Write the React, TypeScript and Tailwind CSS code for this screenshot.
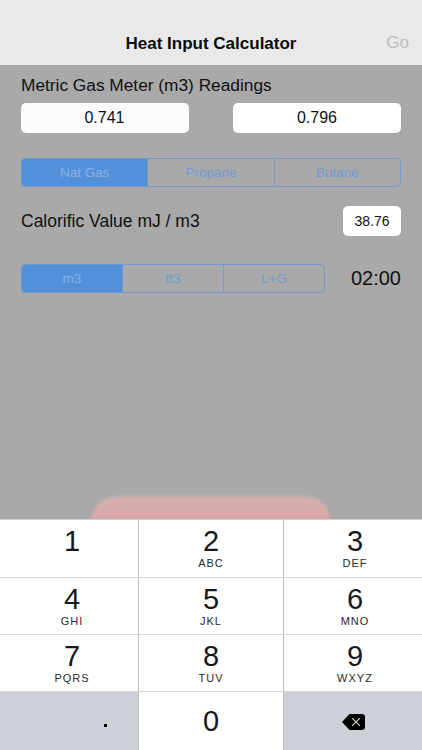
const font = "[font-family:'Liberation_Sans',Arial,sans-serif]";

function Segments({ items, className }: { items: string[]; className: string }) {
  return (
    <div className={`flex h-[29px] rounded-[4px] border border-[#6f9bd4] overflow-hidden ${className}`}>
      {items.map((t, i) => (
        <div
          key={t}
          className={`flex-1 flex items-center justify-center text-[13.5px] pt-[2px] ${i > 0 ? "border-l border-[#6f9bd4]" : ""} ${i === 0 ? "bg-[#5390da] text-[#8bb0e0]" : "text-[#6f9bd4]"}`}
        >
          {t}
        </div>
      ))}
    </div>
  );
}

function Key({ n, l, w, pad, center }: { n: string; l?: string; w: string; pad?: string; center?: boolean }) {
  return (
    <div className={`${w} ${pad ?? ""} h-full bg-white flex flex-col items-center ${center ? "justify-center" : "pt-[4px]"}`}>
      <div className="text-[29px] leading-[34px] text-[#181818]">{n}</div>
      {l && <div className="text-[11px] leading-[13px] tracking-[1px] text-[#2a2a2a] mt-[-1px]">{l}</div>}
    </div>
  );
}

const rows: { h: string; keys: [string, string | undefined][] }[] = [
  { h: "h-[57px]", keys: [["1", undefined], ["2", "ABC"], ["3", "DEF"]] },
  { h: "h-[56px]", keys: [["4", "GHI"], ["5", "JKL"], ["6", "MNO"]] },
  { h: "h-[56px]", keys: [["7", "PQRS"], ["8", "TUV"], ["9", "WXYZ"]] },
];

export default function App() {
  return (
    <div className={`${font} w-[422px] h-[750px] flex flex-col overflow-hidden bg-[#a9a9a9]`}>
      <header className="h-[65px] shrink-0 bg-[#e9e9e9] relative flex items-center justify-center pt-[22px]">
        <div className="text-[17px] font-bold text-[#0c0c0c]">Heat Input Calculator</div>
        <div className="absolute right-[13px] top-[32px] text-[17px] leading-[22px] text-[#bdbdbd]">Go</div>
      </header>

      <main className="flex-1 flex flex-col px-[21px] overflow-hidden min-h-0">
        <div className="text-[17.3px] leading-[20px] text-[#111] mt-[10px]">Metric Gas Meter (m3) Readings</div>
        <div className="flex justify-between mt-[8px]">
          <div className="w-[168px] h-[30px] rounded-[5px] bg-[#fbfbfb] flex items-center justify-center text-[16px] text-[#111] pr-[1px]">0.741</div>
          <div className="w-[168px] h-[30px] rounded-[5px] bg-white flex items-center justify-center text-[16px] text-[#111]">0.796</div>
        </div>

        <Segments items={["Nat Gas", "Propane", "Butane"]} className="w-[380px] mt-[25px]" />

        <div className="flex items-center justify-between mt-[19px]">
          <div className="text-[17.5px] text-[#111]">Calorific Value mJ / m3</div>
          <div className="w-[58px] h-[30px] rounded-[5px] bg-white flex items-center justify-center text-[14px] text-[#111]">38.76</div>
        </div>

        <div className="flex items-center justify-between mt-[28px]">
          <Segments items={["m3", "ft3", "L+G"]} className="w-[304px]" />
          <div className="text-[20px] leading-[24px] text-[#111] mb-[1px]">02:00</div>
        </div>

        <div className="mt-auto mx-auto w-[238px] h-[26px] shrink-0 rounded-t-[24px] bg-gradient-to-b from-[#d3b2b0] to-[#dba5a5] border-t-[2px] border-[#b0aeae] blur-[1.5px] mb-[-2px]" />
      </main>

      <div className="h-[231px] shrink-0 flex flex-col gap-px bg-[#d6d6d6] border-t border-[#cfcfcf] relative">
        {rows.map((r, i) => (
          <div key={i} className={`flex gap-px bg-[#bdbdbd] ${r.h}`}>
            <Key n={r.keys[0][0]} l={r.keys[0][1]} w="w-[138px]" pad="pl-[6px]" />
            <Key n={r.keys[1][0]} l={r.keys[1][1]} w="w-[144px]" />
            <Key n={r.keys[2][0]} l={r.keys[2][1]} w="flex-1" pad="pl-[4px]" />
          </div>
        ))}
        <div className="flex gap-px flex-1 bg-[#bdbdbd]">
          <div className="w-[138px] bg-[#cdd0d6] flex items-center justify-center">
            <div className="w-[3px] h-[3px] bg-black ml-[73px] mt-[9px]" />
          </div>
          <Key n="0" w="w-[144px]" center />
          <div className="flex-1 bg-[#cdd0d6] flex items-center justify-center pl-[1px] pt-[2px]">
            <svg width="23" height="16" viewBox="0 0 23 16">
              <path d="M7.5 0H20a3 3 0 0 1 3 3V13a3 3 0 0 1-3 3H7.5L0 8Z" fill="#000" />
              <path d="M10.2 4.2l7.6 7.6M17.8 4.2l-7.6 7.6" stroke="#d8d8d8" strokeWidth="1.1" fill="none" />
            </svg>
          </div>
        </div>
      </div>
    </div>
  );
}
